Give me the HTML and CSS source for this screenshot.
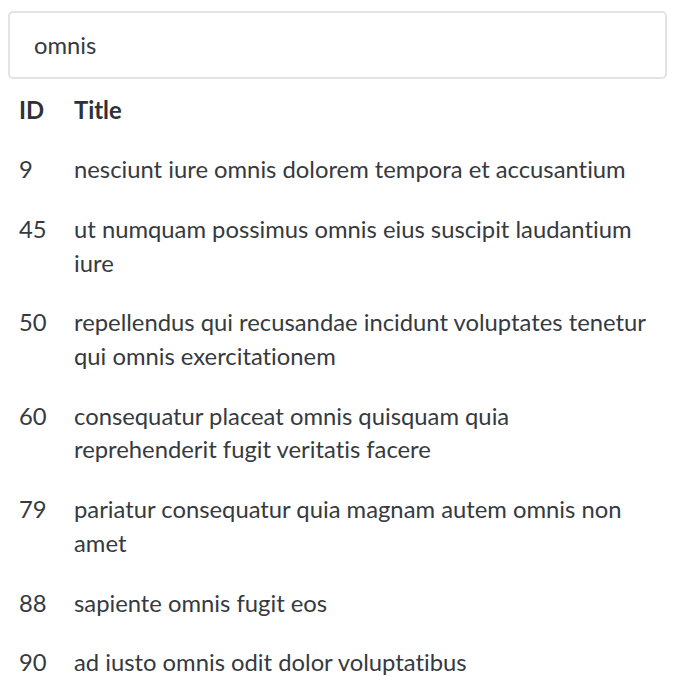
FILE: index.html
```html
<!DOCTYPE html>
<html>
<head>
<meta charset="utf-8">
<link rel="stylesheet" href="styles.css">
</head>
<body>
<input class="search" type="text" value="omnis">
<table class="results">
<thead>
<tr><th class="col-id">ID</th><th>Title</th></tr>
</thead>
<tbody>
<tr><td class="col-id">9</td><td>nesciunt iure omnis dolorem tempora et accusantium</td></tr>
<tr><td class="col-id">45</td><td>ut numquam possimus omnis eius suscipit laudantium iure</td></tr>
<tr><td class="col-id">50</td><td>repellendus qui recusandae incidunt voluptates tenetur qui omnis exercitationem</td></tr>
<tr><td class="col-id">60</td><td>consequatur placeat omnis quisquam quia reprehenderit fugit veritatis facere</td></tr>
<tr><td class="col-id">79</td><td>pariatur consequatur quia magnam autem omnis non amet</td></tr>
<tr><td class="col-id">88</td><td>sapiente omnis fugit eos</td></tr>
<tr><td class="col-id">90</td><td>ad iusto omnis odit dolor voluptatibus</td></tr>
</tbody>
</table>
</body>
</html>
```

FILE: styles.css
```css
body {
  margin: 8px;
  font-family: Lato, "Open Sans", sans-serif;
  font-variant-ligatures: none;
  color: #363a40;
  background: #fff;
}
.search {
  display: block;
  box-sizing: border-box;
  width: calc(100% - 2px);
  height: 68px;
  margin: 3px 0 0 0;
  padding: 0 24px;
  border: 2px solid #e2e3e5;
  border-radius: 5px;
  font-family: Lato, sans-serif;
  font-variant-ligatures: none;
  font-size: 23.8px;
  color: #363a40;
  outline: none;
}
.results {
  border-collapse: collapse;
  width: calc(100% - 6px);
  font-size: 23.8px;
  line-height: 33.7px;
}
.results th, .results td {
  text-align: left;
  vertical-align: top;
  padding: 14.5px 11px 11.5px;
}
.results th {
  font-weight: 700;
  color: #2e3238;
}
.results .col-id {
  width: 33px;
}
```
